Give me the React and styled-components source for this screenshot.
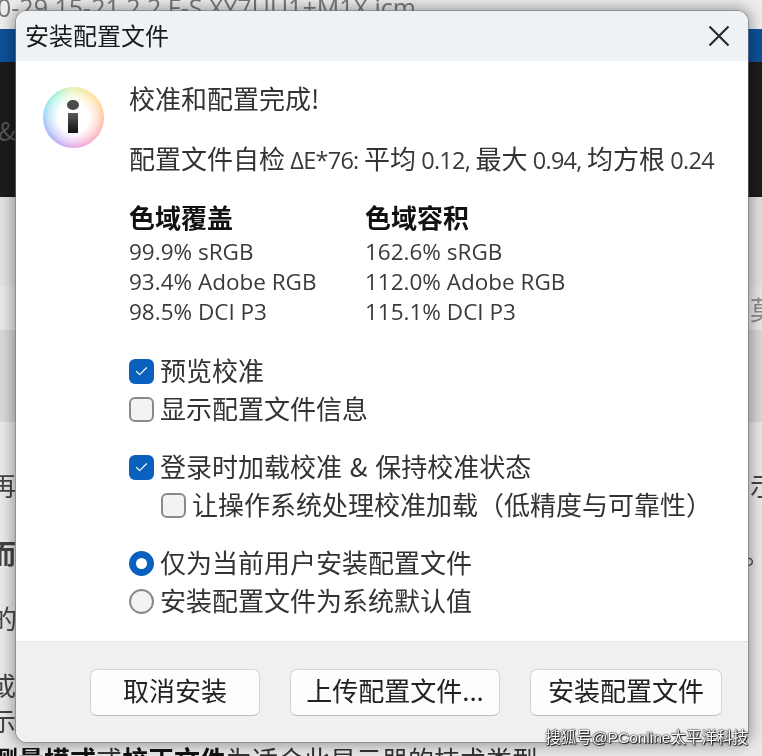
import React from 'react';
import styled, { createGlobalStyle } from 'styled-components';
import { Check } from 'lucide-react';

const cjk = '"Noto Sans CJK SC", "Noto Sans", sans-serif';
const latin = '"Open Sans", "Noto Sans CJK SC", sans-serif';

const GlobalStyle = createGlobalStyle`
  html, body {
    margin: 0;
    padding: 0;
    background: #e8e8e8;
  }
  body {
    font-family: ${latin};
  }
`;

const Page = styled.div`
  position: relative;
  width: 762px;
  height: 756px;
  overflow: hidden;
  filter: blur(0.35px);
`;

/* the window that sits behind the dialog */
const Backdrop = styled.div`
  display: flex;
  flex-direction: column;
  height: 100%;
`;

const Band = styled.div`
  display: flex;
  flex: none;
  align-items: center;
  justify-content: space-between;
  height: ${(p) => p.$h}px;
  background: ${(p) => p.$bg};
  font-family: ${cjk};
  font-size: 26px;
  line-height: 30px;
  color: ${(p) => p.$color || '#777'};
  overflow: hidden;
`;

const FileName = styled.div`
  margin: -16px 0 0 -3px;
  font-family: ${latin};
  font-size: 25px;
  line-height: 30px;
  white-space: nowrap;
  color: #777;
`;

const EdgeGlyph = styled.span`
  margin-left: ${(p) => p.$left || 0}px;
  margin-right: ${(p) => p.$right || 0}px;
  font-weight: ${(p) => (p.$bold ? 700 : 400)};
  color: ${(p) => p.$color || 'inherit'};
  white-space: nowrap;
`;

const BackText = styled.div`
  display: flex;
  flex: 1;
  flex-direction: column;
  padding-top: 48px;
  background: #e9e9e9;
  font-family: ${cjk};
  font-size: 26px;
  color: #444;
`;

const BackLine = styled.div`
  display: flex;
  flex: none;
  align-items: center;
  justify-content: space-between;
  height: 30px;
  margin-bottom: ${(p) => p.$gap}px;
  line-height: 30px;
`;

const BottomLine = styled.div`
  margin: 1px 0 0 -8px;
  font-size: 26px;
  line-height: 30px;
  color: #333;
  white-space: nowrap;

  b {
    font-weight: 700;
    color: #111;
  }
`;

/* dialog */
const Dialog = styled.div`
  position: absolute;
  left: 16px;
  top: 11px;
  width: 732px;
  height: 731px;
  display: flex;
  flex-direction: column;
  box-sizing: border-box;
  border-radius: 11px;
  background: #fff;
  overflow: hidden;
  box-shadow: 0 0 0 1px rgba(120, 120, 120, 0.6), 0 0 14px 3px rgba(0, 0, 0, 0.36);
`;

const TitleBar = styled.div`
  display: flex;
  flex: none;
  align-items: center;
  justify-content: space-between;
  height: 50px;
  padding: 0 18px 4px 9px;
  box-sizing: border-box;
  background: #eff2f4;
  font-family: ${cjk};
  font-size: 24px;
  color: #1a1a1a;
`;

const CloseIcon = styled.svg`
  width: 22px;
  height: 22px;
  margin-top: 4px;
  stroke: #2b2b2b;
  stroke-width: 2.2;
  fill: none;
`;

const Body = styled.div`
  display: flex;
  flex: 1;
  gap: 25px;
  padding: 18px 0 0 27px;
  font-family: ${cjk};
  font-size: 26px;
  color: #333;
`;

const InfoIcon = styled.div`
  position: relative;
  flex: none;
  width: 61px;
  height: 61px;
  margin-top: 8px;
  border-radius: 50%;
  background: radial-gradient(circle, #fff 0 36%, rgba(255, 255, 255, 0.7) 58%, rgba(255, 255, 255, 0) 92%),
    conic-gradient(#d8e860, #ffc040 50deg, #ff8a60 100deg, #f060a0 150deg, #b860e0 190deg, #6a70f0 230deg, #40b8f0 280deg, #50e8c0 320deg, #d8e860);
`;

const InfoDot = styled.div`
  position: absolute;
  top: 13px;
  left: 24px;
  width: 12px;
  height: 10px;
  border-radius: 50%;
  background: #4a4a4a;
`;

const InfoStem = styled.div`
  position: absolute;
  top: 26px;
  left: 25px;
  width: 10px;
  height: 20px;
  background: linear-gradient(#5a5a5a, #111);
`;

const Content = styled.div`
  display: flex;
  flex: 1;
  flex-direction: column;
`;

const Line = styled.div`
  height: 38px;
  line-height: 38px;
  margin-bottom: ${(p) => p.$gap || 0}px;
  white-space: nowrap;
`;

const Num = styled.span`
  font-family: ${latin};
  font-size: 23.5px;
  letter-spacing: -0.75px;
  color: #3a3a3a;
  white-space: pre;
`;

const Stats = styled.div`
  display: grid;
  grid-template-columns: 236px 1fr;
  margin-bottom: 25px;
`;

const StatColumn = styled.div`
  display: flex;
  flex-direction: column;
`;

const StatTitle = styled.div`
  height: 37px;
  margin-top: 1px;
  line-height: 34px;
  font-size: 26px;
  font-weight: 700;
  color: #111;
`;

const StatRow = styled.div`
  height: 30px;
  line-height: 30px;
  font-family: ${latin};
  font-size: 22.5px;
  color: #3a3a3a;
`;

const Options = styled.div`
  display: flex;
  flex-direction: column;
  margin-bottom: 20px;
`;

const Option = styled.div`
  display: flex;
  align-items: center;
  gap: 6px;
  height: 38px;
  padding-bottom: 4px;
  box-sizing: border-box;
  margin-left: ${(p) => p.$indent || 0}px;
  white-space: nowrap;
`;

const CheckBox = styled.span`
  display: flex;
  flex: none;
  align-items: center;
  justify-content: center;
  width: 25px;
  height: 25px;
  margin-top: 4px;
  box-sizing: border-box;
  border-radius: 6px;
  background: ${(p) => (p.$on ? '#0a60bd' : '#f3f3f3')};
  border: ${(p) => (p.$on ? 'none' : '2px solid #8a8a8a')};
  color: #fff;
`;

const Radio = styled.span`
  flex: none;
  width: 25px;
  height: 25px;
  margin-top: 4px;
  box-sizing: border-box;
  border-radius: 50%;
  background: ${(p) => (p.$on ? '#fff' : '#f3f3f3')};
  border: ${(p) => (p.$on ? '7.5px solid #0a60bd' : '2px solid #8a8a8a')};
`;

const Amp = styled.span`
  margin: 0 2px;
`;

const Footer = styled.div`
  display: flex;
  flex: none;
  justify-content: flex-end;
  gap: 30px;
  height: 101px;
  padding: 27px 26px 0 0;
  box-sizing: border-box;
  background: #f0f0f0;
  border-top: 1px solid #e4e4e4;
`;

const Button = styled.div`
  display: flex;
  align-items: center;
  justify-content: center;
  width: ${(p) => p.$w}px;
  height: 47px;
  padding-bottom: 6px;
  box-sizing: border-box;
  border: 1px solid #d6d6d6;
  border-bottom-color: #bdbdbd;
  border-radius: 7px;
  background: #fdfdfd;
  font-family: ${cjk};
  font-size: 26px;
  color: #222;
`;

const Watermark = styled.div`
  position: absolute;
  right: 14px;
  top: 728px;
  font-family: "Liberation Sans", "Noto Sans CJK SC", sans-serif;
  font-size: 15.5px;
  line-height: 20px;
  color: #fff;
  white-space: nowrap;
  text-shadow: 0 0 2px #000, 0 0 1px #000, 1px 1px 1px #222;
`;

const App = () => (
  <Page>
    <GlobalStyle />
    <Backdrop>
      <Band $h={29} $bg="#ededed">
        <FileName>0-29.15-21 2 2 F-S XY7UU1+M1X.icm</FileName>
      </Band>
      <Band $h={33} $bg="#0d5099" />
      <Band $h={135} $bg="#1c1c1c" $color="#555">
        <EdgeGlyph $left={-2}>&amp;</EdgeGlyph>
      </Band>
      <Band $h={90} $bg="#e2e2e2" />
      <Band $h={43} $bg="#e8e8e8">
        <span />
        <EdgeGlyph $right={-14} $color="#8a8a8a">莫</EdgeGlyph>
      </Band>
      <Band $h={92} $bg="#d8d8d8" />
      <BackText>
        <BackLine $gap={38}>
          <EdgeGlyph $left={-10}>再</EdgeGlyph>
          <EdgeGlyph $right={-14}>示</EdgeGlyph>
        </BackLine>
        <BackLine $gap={35}>
          <EdgeGlyph $left={-10} $bold>而</EdgeGlyph>
          <EdgeGlyph $right={-8}>。</EdgeGlyph>
        </BackLine>
        <BackLine $gap={37}>
          <EdgeGlyph $left={-9}>的</EdgeGlyph>
        </BackLine>
        <BackLine $gap={5}>
          <EdgeGlyph $left={-10}>或</EdgeGlyph>
        </BackLine>
        <BackLine $gap={8}>
          <EdgeGlyph $left={-10}>示</EdgeGlyph>
        </BackLine>
        <BottomLine>
          <b>测量模式</b>或<b>校正文件</b>为适合此显示器的技术类型
        </BottomLine>
      </BackText>
    </Backdrop>

    <Dialog>
      <TitleBar>
        安装配置文件
        <CloseIcon viewBox="0 0 22 22">
          <path d="M1.5 1.5 20.5 20.5M20.5 1.5 1.5 20.5" />
        </CloseIcon>
      </TitleBar>
      <Body>
        <InfoIcon>
          <InfoDot />
          <InfoStem />
        </InfoIcon>
        <Content>
          <Line $gap={22}>校准和配置完成!</Line>
          <Line $gap={22}>
            配置文件自检<Num> ΔE*76: </Num>平均<Num> 0.12, </Num>最大<Num> 0.94, </Num>均方根<Num> 0.24</Num>
          </Line>
          <Stats>
            <StatColumn>
              <StatTitle>色域覆盖</StatTitle>
              <StatRow>99.9% sRGB</StatRow>
              <StatRow>93.4% Adobe RGB</StatRow>
              <StatRow>98.5% DCI P3</StatRow>
            </StatColumn>
            <StatColumn>
              <StatTitle>色域容积</StatTitle>
              <StatRow>162.6% sRGB</StatRow>
              <StatRow>112.0% Adobe RGB</StatRow>
              <StatRow>115.1% DCI P3</StatRow>
            </StatColumn>
          </Stats>
          <Options>
            <Option>
              <CheckBox $on><Check size={15} strokeWidth={1.8} /></CheckBox>
              预览校准
            </Option>
            <Option>
              <CheckBox />
              显示配置文件信息
            </Option>
          </Options>
          <Options>
            <Option>
              <CheckBox $on><Check size={15} strokeWidth={1.8} /></CheckBox>
              <span>登录时加载校准<Amp> &amp; </Amp>保持校准状态</span>
            </Option>
            <Option $indent={32}>
              <CheckBox />
              让操作系统处理校准加载（低精度与可靠性）
            </Option>
          </Options>
          <Options>
            <Option>
              <Radio $on />
              仅为当前用户安装配置文件
            </Option>
            <Option>
              <Radio />
              安装配置文件为系统默认值
            </Option>
          </Options>
        </Content>
      </Body>
      <Footer>
        <Button $w={170}>取消安装</Button>
        <Button $w={210}>上传配置文件...</Button>
        <Button $w={192}>安装配置文件</Button>
      </Footer>
    </Dialog>
    <Watermark>搜狐号@PConline太平洋科技</Watermark>
  </Page>
);

export default App;
